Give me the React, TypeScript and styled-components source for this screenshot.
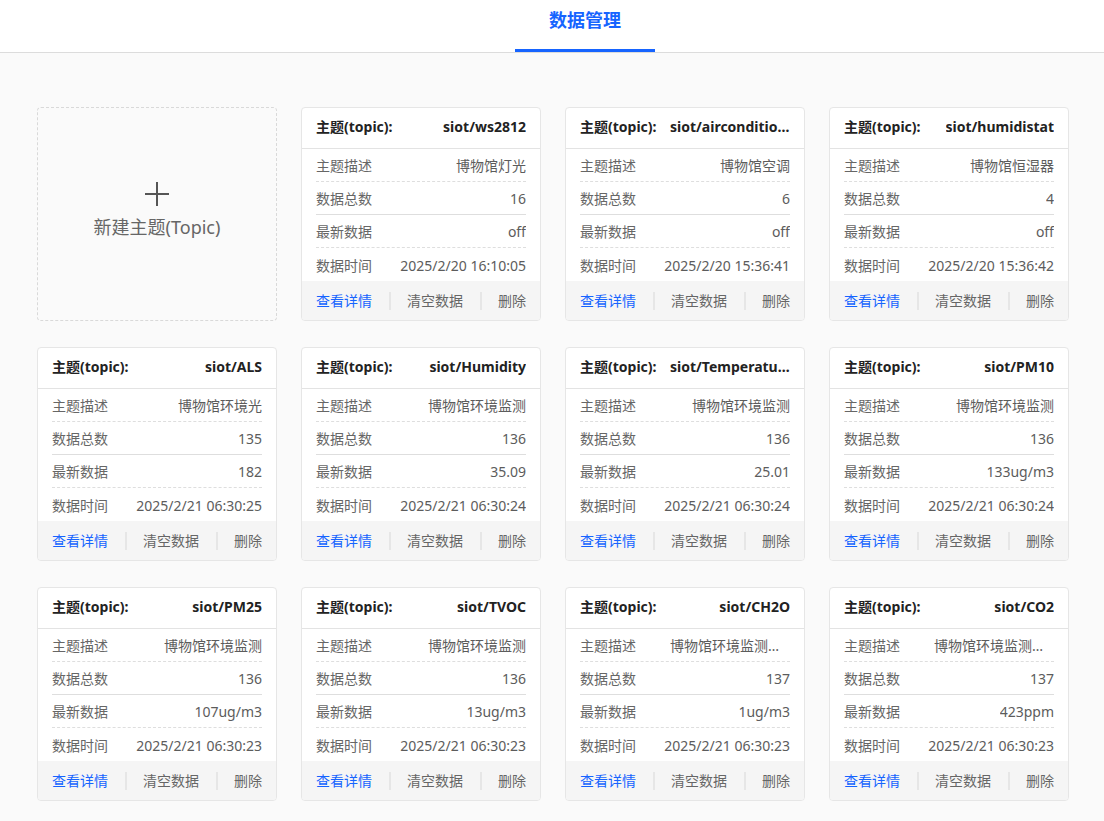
import styled, { createGlobalStyle } from 'styled-components'

const GlobalStyle = createGlobalStyle`
  html, body {
    margin: 0;
    padding: 0;
    background: #fafafa;
    font-family: "Noto Sans", "Noto Sans CJK SC", sans-serif;
  }
  * { box-sizing: border-box; }
`

const TopBar = styled.header`
  height: 53px;
  background: #fff;
  border-bottom: 1px solid #dcdcdc;
  display: flex;
  justify-content: center;
  padding-left: 66px;
`

const Tab = styled.div`
  width: 140px;
  height: 52px;
  display: flex;
  align-items: flex-start;
  justify-content: center;
  padding-top: 6px;
  font-size: 18px;
  font-weight: 700;
  color: #1664ff;
  border-bottom: 3px solid #1664ff;
  font-family: "Noto Sans CJK SC", sans-serif;
`

const Main = styled.main`
  padding: 54px 35px 20px 37px;
  display: grid;
  grid-template-columns: repeat(4, 240px);
  column-gap: 24px;
  row-gap: 26px;
`

const NewCard = styled.div`
  height: 214px;
  border: 1px dashed #d9d9d9;
  border-radius: 4px;
  display: flex;
  flex-direction: column;
  align-items: center;
  justify-content: center;
  gap: 8px;
  color: #666;
  font-size: 18px;
  line-height: 24px;
  padding-bottom: 8px;
  cursor: pointer;
`

const Card = styled.div`
  height: 214px;
  background: #fff;
  border: 1px solid #e6e6e6;
  border-radius: 4px;
  display: flex;
  flex-direction: column;
  overflow: hidden;
`

const CardHead = styled.div`
  height: 41px;
  flex-shrink: 0;
  padding: 0 14px 3px;
  display: flex;
  align-items: center;
  justify-content: space-between;
  border-bottom: 1px solid #e3e3e3;
  font-size: 14px;
  line-height: 20px;
  font-weight: 700;
  color: #222;
`

const Cut = styled.span`
  max-width: 120px;
  white-space: nowrap;
  overflow: hidden;
  text-overflow: ellipsis;
  text-align: right;
`

const Body = styled.div`
  padding: 0 14px;
  flex: 1;
`

const Row = styled.div<{ $line?: 'dashed' | 'solid' }>`
  height: 33px;
  display: flex;
  align-items: center;
  justify-content: space-between;
  padding-top: 2px;
  font-size: 14px;
  line-height: 20px;
  color: #666;
  border-bottom: ${p => (p.$line ? `1px ${p.$line} #dedede` : 'none')};
`

const Label = styled.span`
  flex-shrink: 0;
`

const Value = styled(Cut)<{ $wide?: boolean }>`
  color: #5c5c5c;
  max-width: ${p => (p.$wide ? 'none' : '120px')};
`

const Foot = styled.div`
  height: 40px;
  flex-shrink: 0;
  background: #f5f5f5;
  padding: 0 14px;
  display: flex;
  align-items: center;
  justify-content: space-between;
  font-size: 14px;
  line-height: 20px;
  color: #666;
`

const Action = styled.span<{ $primary?: boolean }>`
  color: ${p => (p.$primary ? '#1664ff' : '#666')};
  cursor: pointer;
`

const Sep = styled.span`
  width: 2px;
  height: 18px;
  background: #e6e6e6;
`

type Topic = { name: string; desc: string; total: number; latest: string; time: string }

const topics: Topic[] = [
  { name: 'siot/ws2812', desc: '博物馆灯光', total: 16, latest: 'off', time: '2025/2/20 16:10:05' },
  { name: 'siot/airconditioner', desc: '博物馆空调', total: 6, latest: 'off', time: '2025/2/20 15:36:41' },
  { name: 'siot/humidistat', desc: '博物馆恒湿器', total: 4, latest: 'off', time: '2025/2/20 15:36:42' },
  { name: 'siot/ALS', desc: '博物馆环境光', total: 135, latest: '182', time: '2025/2/21 06:30:25' },
  { name: 'siot/Humidity', desc: '博物馆环境监测', total: 136, latest: '35.09', time: '2025/2/21 06:30:24' },
  { name: 'siot/Temperature', desc: '博物馆环境监测', total: 136, latest: '25.01', time: '2025/2/21 06:30:24' },
  { name: 'siot/PM10', desc: '博物馆环境监测', total: 136, latest: '133ug/m3', time: '2025/2/21 06:30:24' },
  { name: 'siot/PM25', desc: '博物馆环境监测', total: 136, latest: '107ug/m3', time: '2025/2/21 06:30:23' },
  { name: 'siot/TVOC', desc: '博物馆环境监测', total: 136, latest: '13ug/m3', time: '2025/2/21 06:30:23' },
  { name: 'siot/CH2O', desc: '博物馆环境监测甲醛', total: 137, latest: '1ug/m3', time: '2025/2/21 06:30:23' },
  { name: 'siot/CO2', desc: '博物馆环境监测二氧化碳', total: 137, latest: '423ppm', time: '2025/2/21 06:30:23' },
]

function TopicCard({ t }: { t: Topic }) {
  return (
    <Card>
      <CardHead>
        <Label>主题(topic):</Label>
        <Cut>{t.name}</Cut>
      </CardHead>
      <Body>
        <Row $line="dashed"><Label>主题描述</Label><Value>{t.desc}</Value></Row>
        <Row $line="solid"><Label>数据总数</Label><Value>{t.total}</Value></Row>
        <Row $line="dashed"><Label>最新数据</Label><Value>{t.latest}</Value></Row>
        <Row><Label>数据时间</Label><Value $wide>{t.time}</Value></Row>
      </Body>
      <Foot>
        <Action $primary>查看详情</Action>
        <Sep />
        <Action>清空数据</Action>
        <Sep />
        <Action>删除</Action>
      </Foot>
    </Card>
  )
}

export default function App() {
  return (
    <>
      <GlobalStyle />
      <TopBar>
        <Tab>数据管理</Tab>
      </TopBar>
      <Main>
        <NewCard>
          <svg width="26" height="26" viewBox="0 0 26 26">
            <path d="M13 1v24M1 13h24" stroke="#555" strokeWidth="2" fill="none" />
          </svg>
          <span>新建主题(Topic)</span>
        </NewCard>
        {topics.map(t => (
          <TopicCard key={t.name} t={t} />
        ))}
      </Main>
    </>
  )
}
